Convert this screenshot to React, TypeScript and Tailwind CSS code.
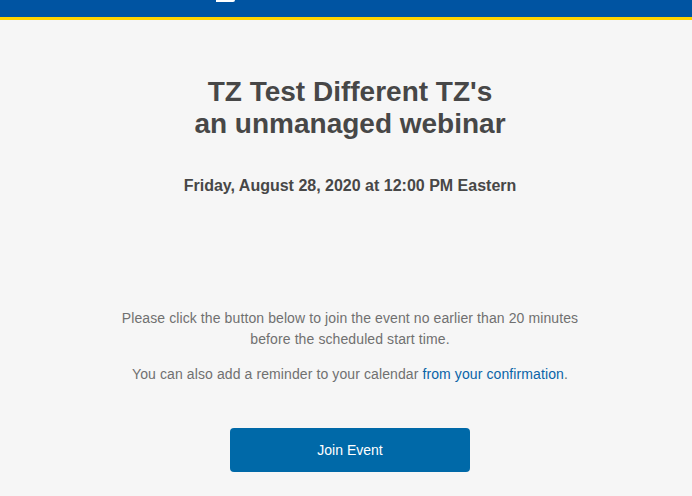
import React from 'react';

export default function App() {
  return (
    <div className="min-h-[496px] w-full bg-[#f6f6f6] font-['Liberation_Sans',Arial,sans-serif]">
      {/* Brand header, logo mostly scrolled out of view */}
      <header className="relative h-[17px] bg-[#0054a2]">
        <div className="absolute left-[216px] top-0 h-[2px] w-[19px] rounded-br-full bg-white"></div>
      </header>
      <div className="h-[3px] bg-[#ffd400]"></div>

      <main className="flex flex-col items-center pl-[32px] pr-6 text-center">
        <h1 className="mt-[56px] text-[28px] font-bold leading-[32px] text-[#474747]">
          TZ Test Different TZ's
          <br />
          an unmanaged webinar
        </h1>

        <p className="mt-[36px] text-[16px] font-bold leading-[20px] text-[#474747]">
          Friday, August 28, 2020 at 12:00 PM Eastern
        </p>

        <div className="mt-[112px] w-[470px] text-[14px] leading-[21px] tracking-[0.1px] text-[#707070]">
          <p>
            Please click the button below to join the event no earlier than 20 minutes before the
            scheduled start time.
          </p>
          <p className="mt-[14px]">
            You can also add a reminder to your calendar{' '}
            <a href="#" className="text-[#0a64a8]">
              from your confirmation
            </a>
            .
          </p>
        </div>

        <button className="mt-[43px] h-[44px] w-[240px] rounded-[4px] bg-[#0069a8] text-[14px] text-white">
          Join Event
        </button>
      </main>
    </div>
  );
}
